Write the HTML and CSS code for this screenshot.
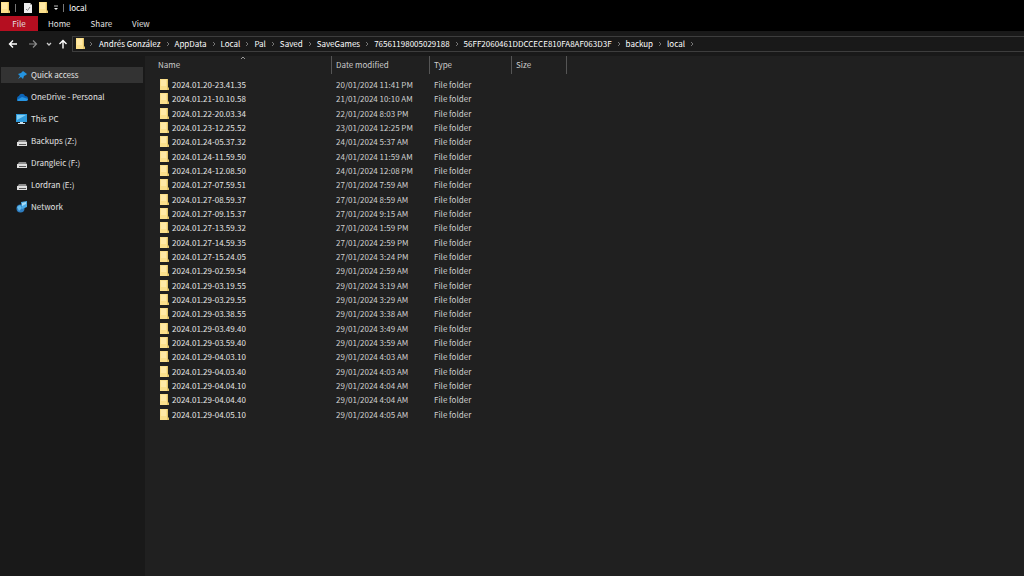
FILE: index.html
```html
<!DOCTYPE html>
<html lang="en">
<head>
<meta charset="utf-8">
<title>local</title>
<link rel="stylesheet" href="styles.css">
</head>
<body>
<svg class="defs" aria-hidden="true">
  <symbol id="folder" viewBox="0 0 10 12"><path fill="#e3c56c" d="M1 0h8v8l1 1v2H1z"/><path fill="#fbe08c" d="M1 0h7v11H1z"/><path fill="#ffe9a6" d="M2 1h5v6H2z"/></symbol>
  <symbol id="chev" viewBox="0 0 4 6"><path d="M1 1l2 2-2 2" fill="none" stroke="#757575"/></symbol>
  <symbol id="drive" viewBox="0 0 12 12"><path fill="#8c8c8c" d="M3 5h7l1 3H1z"/><path fill="#dedede" d="M1 7h10v4H1z"/><path fill="#555" d="M3 9h7v1H3z"/></symbol>
</svg>
<header class="titlebar">
  <svg class="folder"><use href="#folder"/></svg>
  <span class="rule"></span>
  <button class="tool props" aria-label="Properties"><svg viewBox="0 0 10 12"><path fill="#eee" d="M1 1h6l2 2v8H1z"/><path d="M3 7l1.500 1.500L7 5" fill="none" stroke="#888"/><path fill="#aaa" d="M7 1v2h2z"/></svg></button>
  <button class="tool" aria-label="New folder"><svg class="folder"><use href="#folder"/></svg></button>
  <button class="tool more" aria-label="Customize toolbar"><svg viewBox="0 0 6 6"><path d="M1 1h4" stroke="#bbb"/><path fill="#eee" d="M1 3h4L3 5z"/></svg></button>
  <span class="rule last"></span>
  <h1 class="title">local</h1>
</header>
<nav class="tabs" aria-label="Ribbon">
  <button class="tab file">File</button><button class="tab">Home</button><button class="tab">Share</button><button class="tab">View</button>
</nav>
<div class="navbar">
  <button class="nav" aria-label="Back"><svg viewBox="0 0 10 10"><path d="M9 5H1.500M5 1.500L1.500 5 5 8.500" fill="none" stroke="#fff" stroke-width="1.400"/></svg></button>
  <button class="nav" aria-label="Forward"><svg viewBox="0 0 10 10"><path d="M1 5h7.500M5 1.500L8.500 5 5 8.500" fill="none" stroke="#8c8c8c" stroke-width="1.200"/></svg></button>
  <button class="nav recent" aria-label="Recent locations"><svg viewBox="0 0 10 10"><path d="M3 4l2 2 2-2" fill="none" stroke="#ccc" stroke-width="1.300"/></svg></button>
  <button class="nav up" aria-label="Up"><svg viewBox="0 0 10 10"><path d="M5 9.500V1.500M1.500 5L5 1.500 8.500 5" fill="none" stroke="#fff" stroke-width="1.400"/></svg></button>
  <div class="address">
    <svg class="folder"><use href="#folder"/></svg>
    <svg class="chev first"><use href="#chev"/></svg>
    <a href="#">Andrés González</a><svg class="chev"><use href="#chev"/></svg>
    <a href="#">AppData</a><svg class="chev"><use href="#chev"/></svg>
    <a href="#">Local</a><svg class="chev"><use href="#chev"/></svg>
    <a href="#">Pal</a><svg class="chev"><use href="#chev"/></svg>
    <a href="#">Saved</a><svg class="chev"><use href="#chev"/></svg>
    <a href="#">SaveGames</a><svg class="chev"><use href="#chev"/></svg>
    <a href="#">76561198005029188</a><svg class="chev"><use href="#chev"/></svg>
    <a href="#">56FF2060461DDCCECE810FA8AF063D3F</a><svg class="chev"><use href="#chev"/></svg>
    <a href="#">backup</a><svg class="chev"><use href="#chev"/></svg>
    <a href="#">local</a><svg class="chev"><use href="#chev"/></svg>
  </div>
</div>
<div class="body">
  <nav class="side" aria-label="Locations">
    <a href="#" class="place active"><svg viewBox="0 0 12 12"><path fill="#2494e0" d="M7 2l4 3-1 1-2 1-1 3-2-2-3 2 2-3-2-2 3-1z"/></svg>Quick access</a>
    <a href="#" class="place"><svg viewBox="0 0 12 12"><path fill="#0c65b8" d="M1 8c0-2 1-3 2-3 1-3 5-3 6 0 2 0 3 1 3 3 0 1-1 2-2 2H2C1 10 1 9 1 8z"/><path fill="#2795e2" d="M1 9l5-3 6 2c0 1-1 2-2 2H2z"/></svg>OneDrive - Personal</a>
    <a href="#" class="place"><svg viewBox="0 0 12 12"><path fill="#2f9bdc" d="M0 1h11v8H0z"/><path fill="#80cff5" d="M1 2h9L1 7z"/><path fill="#cde3ef" d="M4 9h3v1h2v1H2v-1h2z"/></svg>This PC</a>
    <a href="#" class="place"><svg><use href="#drive"/></svg>Backups (Z:)</a>
    <a href="#" class="place"><svg><use href="#drive"/></svg>Drangleic (F:)</a>
    <a href="#" class="place"><svg><use href="#drive"/></svg>Lordran (E:)</a>
    <a href="#" class="place"><svg viewBox="0 0 12 12"><circle cx="4.500" cy="7.500" r="4" fill="#2e7dc0"/><path fill="#62b9ea" d="M1 6l3-2 2 3-3 3z"/><path fill="#4aaae5" d="M5 1l6-1v6l-5 2z"/><path fill="#a6dcf7" d="M6 2l4-1v2L6 5z"/></svg>Network</a>
  </nav>
  <main class="files">
    <table>
      <colgroup><col class="c-name"><col class="c-date"><col class="c-type"><col class="c-size"><col></colgroup>
      <thead><tr><th>Name<svg class="sort" viewBox="0 0 6 4"><path d="M1 3l2-2 2 2" fill="none" stroke="#999"/></svg></th><th>Date modified</th><th>Type</th><th>Size</th><td></td></tr></thead>
      <tbody id="rows"></tbody>
    </table>
  </main>
</div>
<script src="files.js"></script>
</body>
</html>
```
FILE: styles.css
```css
* { box-sizing: border-box; }
body {
  margin: 0;
  min-height: 100vh;
  display: flex;
  flex-direction: column;
  background: #202020;
  color: #e4e4e4;
  font: 8px/14px "Noto Sans CJK SC", "Open Sans", sans-serif;
}
button { font: inherit; color: inherit; background: none; border: 0; padding: 0; }
a { color: inherit; text-decoration: none; }
svg { display: block; flex: none; }
.defs { position: absolute; width: 0; height: 0; }
.folder { width: 10px; height: 12px; }

.titlebar { display: flex; align-items: center; height: 16px; background: #000; }
.rule { width: 1px; height: 8px; margin: 0 7px 0 5px; background: #777; }
.rule.last { margin: 0 5px 0 4px; }
.tool { margin-right: 5px; }
.tool svg { width: 10px; height: 12px; }
.tool.more { margin: 0; }
.tool.more svg { width: 6px; height: 6px; }
.title { margin: 0; font: inherit; color: #fff; }

.tabs { display: flex; height: 15px; background: #000; }
.tab { padding: 0 10px; line-height: 15px; }
.tab.file { width: 38px; padding: 0; background: #b50e20; }

.navbar { display: flex; align-items: center; height: 25px; padding-left: 8px; background: #191919; }
.nav { margin-right: 10px; }
.nav svg { width: 10px; height: 10px; }
.nav.recent { margin-right: 4px; margin-left: -4px; }
.nav.up { margin-right: 4px; }
.address {
  display: flex;
  flex: 1;
  align-items: center;
  height: 16px;
  padding-left: 2px;
  background: #191919;
  border: 1px solid #3d3d3d;
  border-right: 0;
  color: #fff;
}
.chev { width: 4px; height: 6px; margin: 0 5px; }
.chev.first { margin: 0 6px 0 4px; }

.body { display: flex; flex: 1; }
.side { width: 145px; padding: 11px 2px 0 1px; background: #191919; }
.place { display: flex; align-items: center; gap: 3px; height: 16px; margin-bottom: 6px; padding-left: 15px; }
.place svg { width: 12px; height: 12px; }
.place.active { background: #333; }

.files { flex: 1; padding-left: 13px; }
table { width: 100%; table-layout: fixed; border-collapse: separate; border-spacing: 0; }
th, td { padding: 0 0 0 4px; text-align: left; font-weight: 400; white-space: nowrap; }
thead th, thead td { height: 18px; border-left: 1px solid #555; color: #ccc; }
thead th:first-child { border: 0; padding: 0; }
th:first-child { position: relative; }
.sort { position: absolute; top: 0; left: 82px; width: 6px; height: 4px; }
.c-name { width: 173px; }
.c-date { width: 98px; }
.c-type { width: 82px; }
.c-size { width: 55px; }
tbody::before { content: ""; display: block; height: 4px; }
tbody td { height: 14px; padding-left: 5px; line-height: 14px; color: #d0d0d0; }
tbody tr:nth-child(3n) td { height: 15px; }
tbody td:first-child { padding-left: 1px; color: #e4e4e4; }
.entry { display: flex; align-items: center; gap: 3px; }
```
FILE: files.js
```js
const files = [
  ["2024.01.20-23.41.35", "20/01/2024 11:41 PM"],
  ["2024.01.21-10.10.58", "21/01/2024 10:10 AM"],
  ["2024.01.22-20.03.34", "22/01/2024 8:03 PM"],
  ["2024.01.23-12.25.52", "23/01/2024 12:25 PM"],
  ["2024.01.24-05.37.32", "24/01/2024 5:37 AM"],
  ["2024.01.24-11.59.50", "24/01/2024 11:59 AM"],
  ["2024.01.24-12.08.50", "24/01/2024 12:08 PM"],
  ["2024.01.27-07.59.51", "27/01/2024 7:59 AM"],
  ["2024.01.27-08.59.37", "27/01/2024 8:59 AM"],
  ["2024.01.27-09.15.37", "27/01/2024 9:15 AM"],
  ["2024.01.27-13.59.32", "27/01/2024 1:59 PM"],
  ["2024.01.27-14.59.35", "27/01/2024 2:59 PM"],
  ["2024.01.27-15.24.05", "27/01/2024 3:24 PM"],
  ["2024.01.29-02.59.54", "29/01/2024 2:59 AM"],
  ["2024.01.29-03.19.55", "29/01/2024 3:19 AM"],
  ["2024.01.29-03.29.55", "29/01/2024 3:29 AM"],
  ["2024.01.29-03.38.55", "29/01/2024 3:38 AM"],
  ["2024.01.29-03.49.40", "29/01/2024 3:49 AM"],
  ["2024.01.29-03.59.40", "29/01/2024 3:59 AM"],
  ["2024.01.29-04.03.10", "29/01/2024 4:03 AM"],
  ["2024.01.29-04.03.40", "29/01/2024 4:03 AM"],
  ["2024.01.29-04.04.10", "29/01/2024 4:04 AM"],
  ["2024.01.29-04.04.40", "29/01/2024 4:04 AM"],
  ["2024.01.29-04.05.10", "29/01/2024 4:05 AM"]
];
document.getElementById("rows").innerHTML = files.map(([name, date]) =>
  `<tr><td><span class="entry"><svg class="folder"><use href="#folder"/></svg>${name}</span></td><td>${date}</td><td>File folder</td><td></td><td></td></tr>`
).join("");
```
